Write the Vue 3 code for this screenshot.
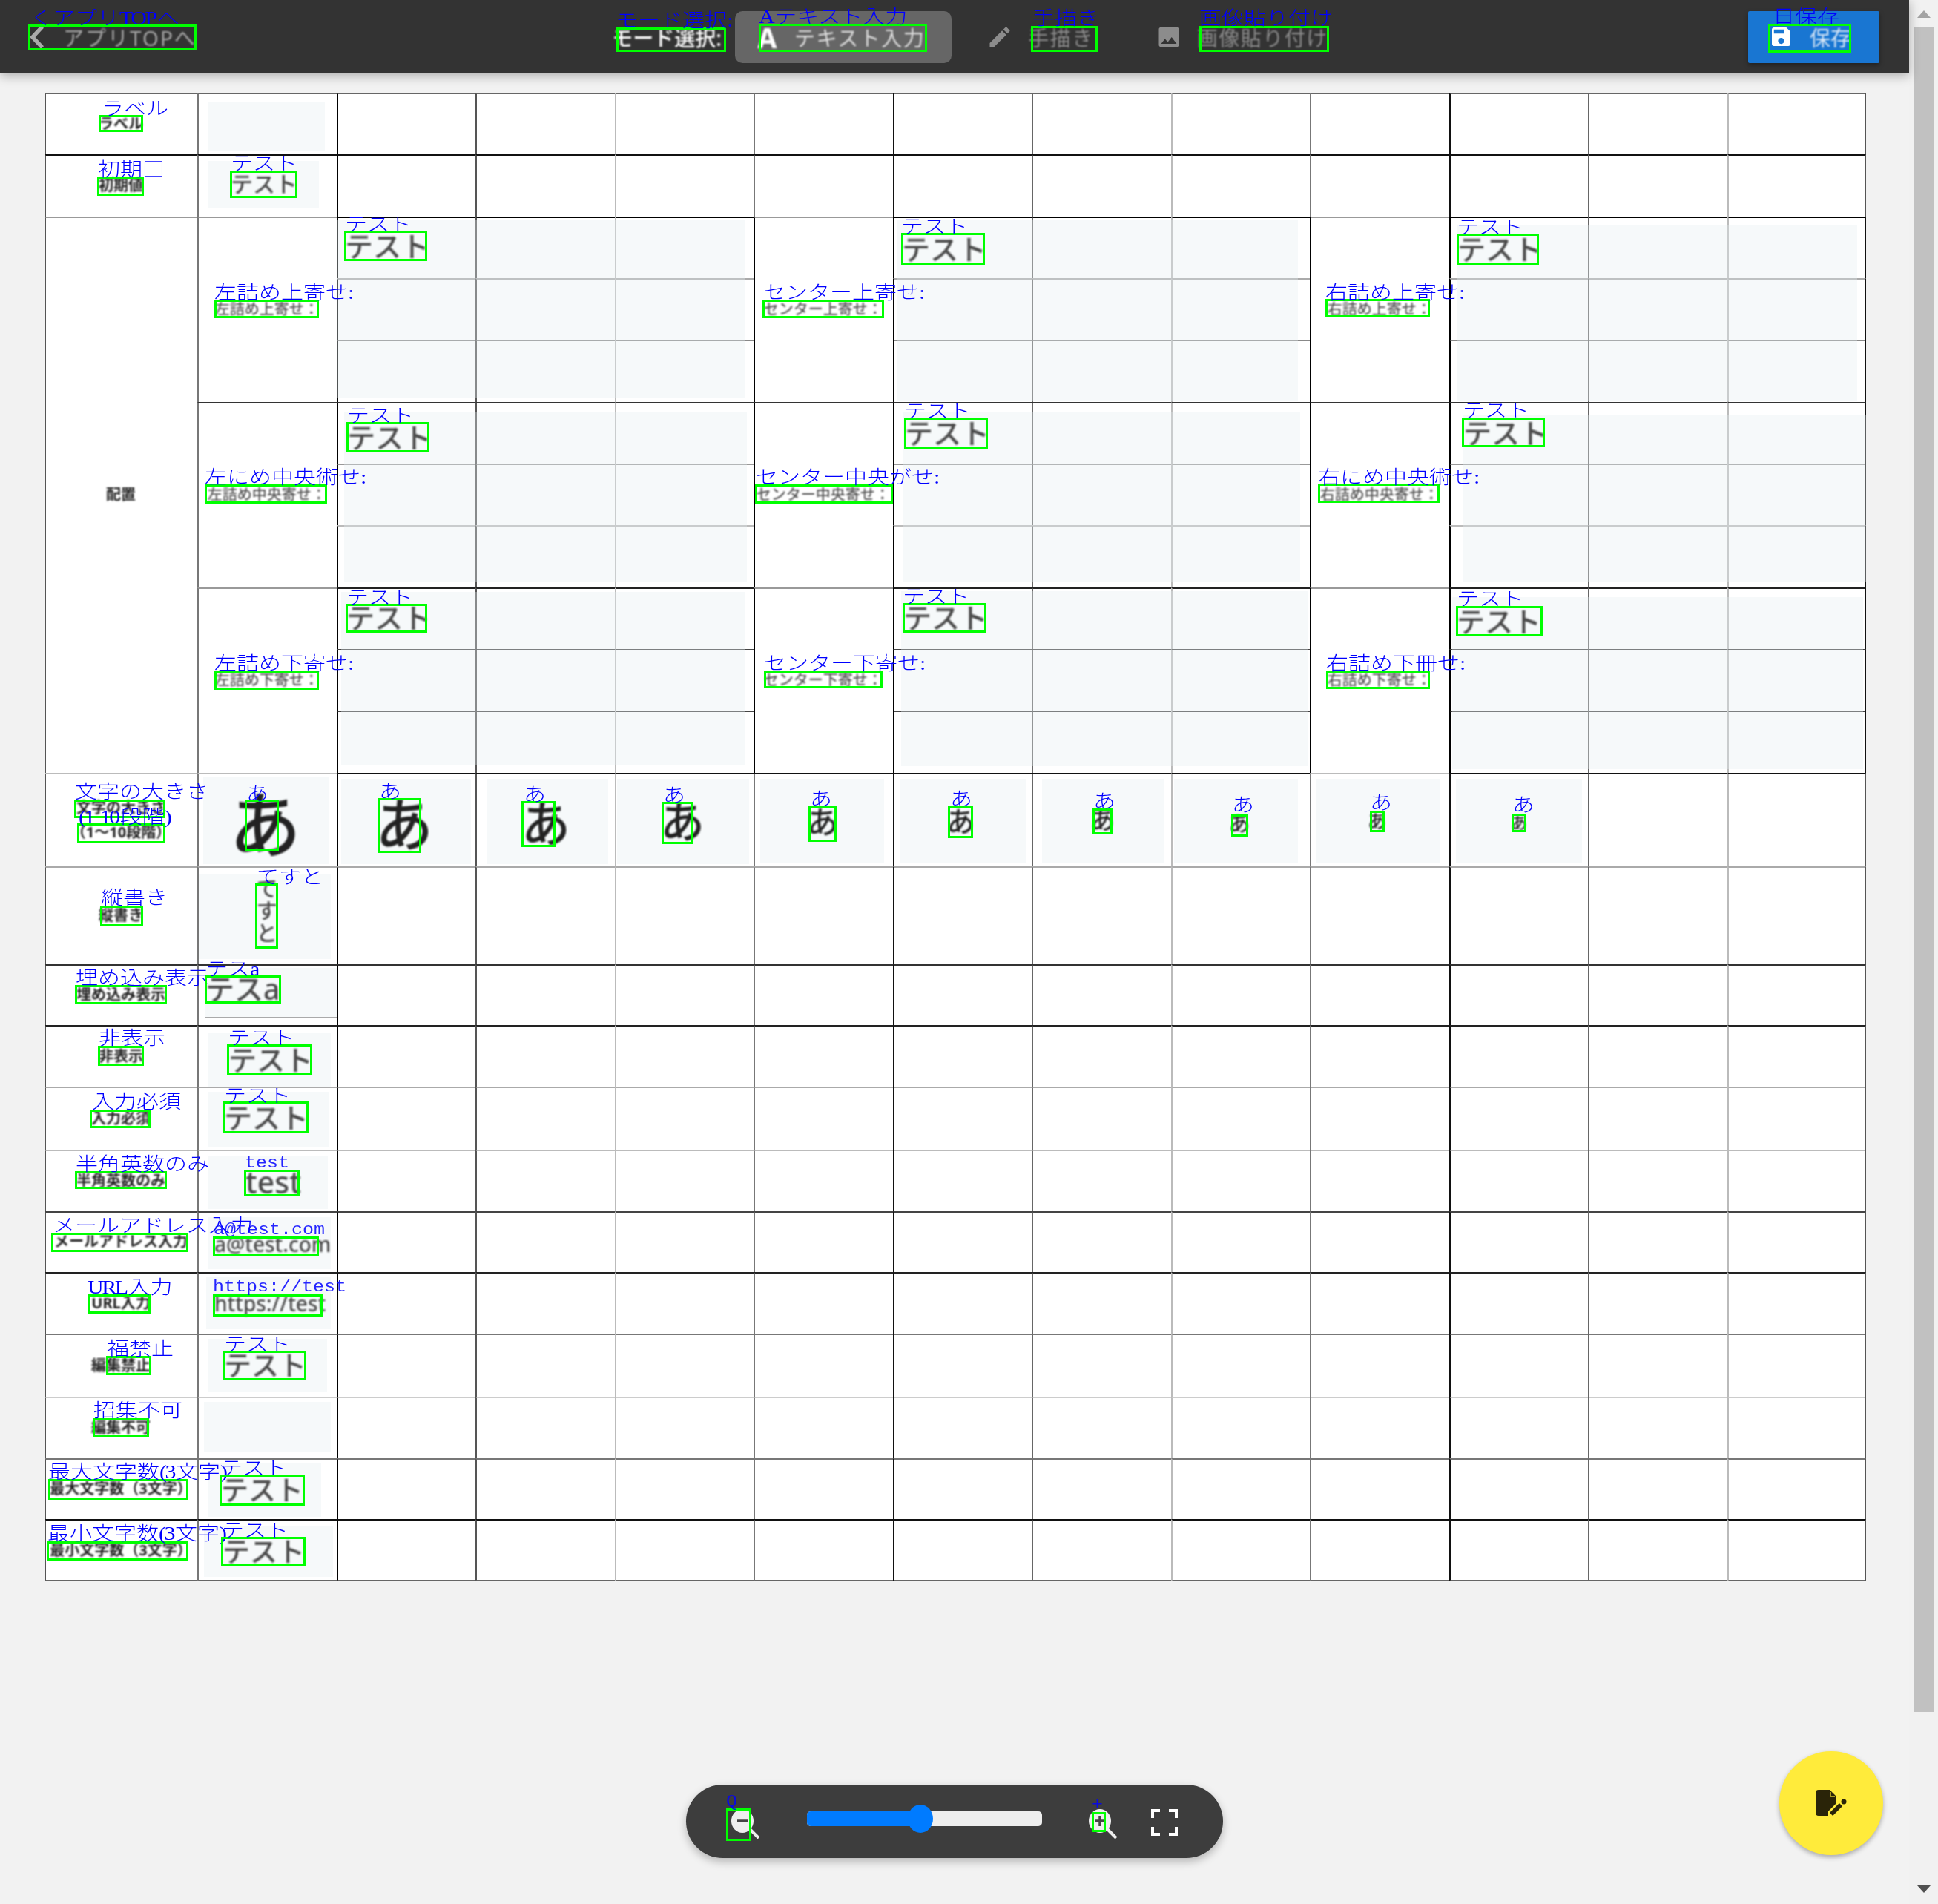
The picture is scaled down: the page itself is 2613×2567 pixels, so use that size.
<script setup>
const colX = (c) => (c === 0 ? 60 : 266 + 187.5 * (c - 1))
const rowLines = [125, 208, 292, 375, 458, 542, 625, 708, 792, 875, 958, 1042, 1168, 1300, 1382, 1465, 1550, 1633, 1715, 1798, 1883, 1966, 2048, 2132]
const rowY = (r) => rowLines[r]

const colTones = ['#555', '#777', '#000', '#555', '#bbb', '#777', '#111', '#666', '#bbb', '#777', '#111', '#666', '#bbb']
const rowTones = ['#666', '#111', '#888', '#aaa', '#888', '#333', '#999', '#bbb', '#999', '#444', '#444', '#bbb', '#aaa', '#333', '#222', '#aaa', '#bbb', '#444', '#222', '#777', '#ccc', '#777', '#111']

const inBlock = (c) => (c >= 2 && c <= 4) || (c >= 6 && c <= 8) || c >= 10
const merged = [
  [2, 0, 9, 1],
  ...[2, 5, 8].flatMap((r) => [1, 5, 9].map((c) => [r, c, 3, 1]))
]
const covered = new Set()
merged.forEach(([r, c, rs]) => {
  for (let i = 0; i < rs; i++) covered.add(`${r + i}-${c}`)
})

const topTone = (r, c) => {
  if (r === 2) return inBlock(c) ? '#000' : '#999'
  if (r === 5 && c >= 1) return '#333'
  if (r === 8) return inBlock(c) ? '#222' : c >= 1 ? '#999' : rowTones[r]
  if (r === 11) return inBlock(c) || c === 5 ? '#111' : '#bbb'
  return rowTones[r]
}
const leftTone = (r, c) => {
  if (r >= 2 && r <= 10 && [2, 5, 6, 9, 10].includes(c)) return '#000'
  return colTones[c]
}

const cells = []
for (let r = 0; r < 23; r++) {
  for (let c = 0; c < 13; c++) {
    const m = merged.find((x) => x[0] === r && x[1] === c)
    if (covered.has(`${r}-${c}`) && !m) continue
    const rs = m ? m[2] : 1
    cells.push({
      key: `${r}-${c}`,
      style: {
        gridArea: `${r + 1} / ${c + 1} / span ${rs} / span 1`,
        borderTopColor: topTone(r, c),
        borderLeftColor: leftTone(r, c),
        borderRight: c === 12 ? `2px solid ${r >= 2 && r <= 10 ? '#111' : '#555'}` : undefined,
        borderBottom: r + rs === 23 ? '2px solid #666' : undefined
      }
    })
  }
}

const label = (r, c, rs, text, kind = 'strong') => ({
  key: `l${r}-${c}`,
  text,
  kind,
  style: { gridArea: `${r + 1} / ${c + 1} / span ${rs} / span 1` }
})
const labels = [
  label(0, 0, 1, ['ラベル']),
  label(1, 0, 1, ['初期値']),
  label(2, 0, 9, ['配置']),
  label(11, 0, 1, ['文字の大きさ', '（1〜10段階）']),
  label(12, 0, 1, ['縦書き']),
  label(13, 0, 1, ['埋め込み表示']),
  label(14, 0, 1, ['非表示']),
  label(15, 0, 1, ['入力必須']),
  label(16, 0, 1, ['半角英数のみ']),
  label(17, 0, 1, ['メールアドレス入力']),
  label(18, 0, 1, ['URL入力']),
  label(19, 0, 1, ['編集禁止']),
  label(20, 0, 1, ['編集不可']),
  label(21, 0, 1, ['最大文字数（3文字）']),
  label(22, 0, 1, ['最小文字数（3文字）']),
  label(2, 1, 3, ['左詰め上寄せ：'], 'soft'),
  label(2, 5, 3, ['センター上寄せ：'], 'soft'),
  label(2, 9, 3, ['右詰め上寄せ：'], 'soft'),
  label(5, 1, 3, ['左詰め中央寄せ：'], 'soft'),
  label(5, 5, 3, ['センター中央寄せ：'], 'soft'),
  label(5, 9, 3, ['右詰め中央寄せ：'], 'soft'),
  label(8, 1, 3, ['左詰め下寄せ：'], 'soft'),
  label(8, 5, 3, ['センター下寄せ：'], 'soft'),
  label(8, 9, 3, ['右詰め下寄せ：'], 'soft')
]

const field = (r, c, rs, cs, [x1, y1, x2, y2], text, fs, tx, cy, mod) => ({
  key: `f${r}-${c}`,
  text,
  mod,
  style: {
    gridArea: `${r + 1} / ${c + 1} / span ${rs} / span ${cs}`,
    marginLeft: `${x1 - colX(c)}px`,
    marginTop: `${y1 - rowY(r)}px`,
    marginRight: `${colX(c + cs) - x2}px`,
    marginBottom: `${rowY(r + rs) - y2}px`,
    paddingLeft: `${text ? tx - x1 : 0}px`,
    paddingTop: `${text ? cy - fs / 2 - y1 : 0}px`,
    fontSize: `${fs}px`,
    lineHeight: `${fs}px`
  }
})
const T = 'テスト'
const A = 'あ'
const fields = [
  field(0, 1, 1, 1, [280, 137, 438, 204], '', 30, 0, 0),
  field(1, 1, 1, 1, [280, 217, 430, 280], T, 30, 311, 248),
  field(2, 2, 3, 3, [454, 297, 1005, 537], T, 38, 465, 331),
  field(2, 6, 3, 3, [1210, 297, 1750, 540], T, 38, 1216, 335),
  field(2, 10, 3, 3, [1964, 303, 2504, 540], T, 38, 1965, 335),
  field(5, 2, 3, 3, [464, 555, 1007, 784], T, 38, 468, 589),
  field(5, 6, 3, 3, [1217, 555, 1753, 785], T, 38, 1220, 583),
  field(5, 10, 3, 3, [1973, 560, 2516, 785], T, 38, 1972, 583),
  field(8, 2, 3, 3, [460, 798, 1005, 1032], T, 38, 467, 832),
  field(8, 6, 3, 3, [1215, 797, 1764, 1033], T, 38, 1218, 832),
  field(8, 10, 3, 3, [1958, 805, 2512, 1037], T, 38, 1964, 837),
  field(11, 1, 1, 1, [274, 1048, 443, 1165], A, 97, 309, 1110, 'dark'),
  field(11, 2, 1, 1, [460, 1050, 635, 1165], A, 78, 506, 1111, 'dark'),
  field(11, 3, 1, 1, [657, 1050, 820, 1165], A, 66, 703, 1109, 'dark'),
  field(11, 4, 1, 1, [832, 1050, 1010, 1165], A, 60, 890, 1107, 'dark'),
  field(11, 5, 1, 1, [1025, 1050, 1192, 1163], A, 42, 1088, 1108, 'dark'),
  field(11, 6, 1, 1, [1213, 1050, 1383, 1163], A, 38, 1276, 1106, 'dark'),
  field(11, 7, 1, 1, [1405, 1050, 1570, 1163], A, 33, 1470, 1105, 'dark'),
  field(11, 8, 1, 1, [1583, 1050, 1750, 1163], A, 28, 1657, 1110, 'dark'),
  field(11, 9, 1, 1, [1775, 1050, 1942, 1163], A, 25, 1844, 1106, 'dark'),
  field(11, 10, 1, 1, [1963, 1050, 2133, 1163], A, 22, 2037, 1108, 'dark'),
  field(12, 1, 1, 1, [268, 1178, 446, 1293], 'てすと', 29, 344, 1238, 'vert'),
  field(13, 1, 1, 1, [276, 1305, 454, 1373], 'テスa', 39, 277, 1332, 'line'),
  field(14, 1, 1, 1, [280, 1393, 446, 1465], T, 38, 308, 1428),
  field(15, 1, 1, 1, [280, 1472, 443, 1546], T, 38, 302, 1506),
  field(16, 1, 1, 1, [280, 1559, 442, 1630], 'test', 41, 331, 1593),
  field(17, 1, 1, 1, [280, 1641, 446, 1711], 'a@test.com', 28, 289, 1677),
  field(18, 1, 1, 1, [278, 1722, 446, 1792], 'https://test', 28, 289, 1757),
  field(19, 1, 1, 1, [280, 1805, 441, 1877], T, 37, 302, 1840),
  field(20, 1, 1, 1, [275, 1890, 446, 1957], '', 30, 0, 0),
  field(21, 1, 1, 1, [280, 1972, 433, 2045], T, 37, 298, 2008),
  field(22, 1, 1, 1, [275, 2058, 449, 2126], T, 37, 300, 2091)
]

const latin = /^[A-Za-z0-9():]+$/
const note = (x1, y1, x2, y2, text, tx, ty, mono) => ({
  key: `${x1}-${y1}`,
  parts: mono
    ? [{ t: text, lat: false }]
    : text.match(/[A-Za-z0-9():]+|[^A-Za-z0-9():]+/g).map((t) => ({ t, lat: latin.test(t) })),
  mono,
  box: { left: `${x1}px`, top: `${y1}px`, width: `${x2 - x1}px`, height: `${y2 - y1}px` },
  pos: { left: `${tx}px`, top: `${ty}px` }
})
const notes = [
  note(38, 33, 265, 68, 'くアプリTOPへ', 41, 11),
  note(831, 37, 979, 70, 'モード選択:', 830, 14),
  note(1023, 32, 1250, 70, 'Aテキスト入力', 1023, 9),
  note(1390, 35, 1480, 70, '手描き', 1392, 11),
  note(1617, 35, 1792, 70, '画像貼り付け', 1617, 11),
  note(2384, 32, 2496, 71, '日保存', 2390, 9),
  note(133, 155, 193, 178, 'ラベル', 137, 133),
  note(131, 238, 194, 264, '初期□', 132, 215),
  note(310, 230, 401, 267, T, 311, 207),
  note(464, 311, 576, 352, T, 465, 289),
  note(1215, 314, 1328, 357, T, 1215, 292),
  note(1964, 315, 2075, 357, T, 1964, 293),
  note(289, 404, 430, 429, '左詰め上寄せ:', 289, 381),
  note(1028, 404, 1192, 429, 'センター上寄せ:', 1029, 381),
  note(1787, 403, 1928, 428, '右詰め上寄せ:', 1787, 381),
  note(467, 569, 579, 610, T, 468, 547),
  note(1219, 563, 1332, 605, T, 1219, 541),
  note(1971, 563, 2083, 603, T, 1972, 540),
  note(276, 653, 441, 679, '左にめ中央術せ:', 276, 630),
  note(1018, 653, 1204, 679, 'センター中央がせ:', 1019, 630),
  note(1777, 652, 1941, 678, '右にめ中央術せ:', 1777, 630),
  note(466, 814, 576, 853, T, 467, 792),
  note(1217, 813, 1330, 853, T, 1217, 791),
  note(1963, 817, 2080, 858, T, 1964, 794),
  note(289, 904, 430, 930, '左詰め下寄せ:', 289, 881),
  note(1030, 904, 1190, 928, 'センター下寄せ:', 1030, 881),
  note(1788, 904, 1928, 929, '右詰め下冊せ:', 1788, 881),
  note(100, 1078, 223, 1103, '文字の大きさ', 101, 1054),
  note(104, 1110, 223, 1137, '(1 10段階)', 106, 1088),
  note(330, 1078, 376, 1148, A, 332, 1057),
  note(509, 1076, 568, 1150, A, 511, 1054),
  note(703, 1080, 749, 1142, A, 706, 1058),
  note(892, 1081, 934, 1138, A, 894, 1059),
  note(1090, 1087, 1128, 1135, A, 1092, 1064),
  note(1278, 1087, 1312, 1130, A, 1281, 1064),
  note(1473, 1090, 1500, 1125, A, 1474, 1067),
  note(1660, 1098, 1683, 1128, A, 1661, 1072),
  note(1847, 1093, 1867, 1122, A, 1847, 1069),
  note(2038, 1097, 2058, 1122, A, 2039, 1072),
  note(135, 1221, 193, 1249, '縦書き', 136, 1197),
  note(344, 1191, 375, 1279, 'てすと', 346, 1169),
  note(101, 1328, 225, 1354, '埋め込み表示', 102, 1305),
  note(276, 1315, 379, 1353, 'テスa', 277, 1293),
  note(132, 1410, 194, 1437, '非表示', 133, 1386),
  note(306, 1408, 421, 1450, T, 307, 1386),
  note(121, 1496, 203, 1521, '入力必須', 124, 1472),
  note(301, 1485, 416, 1528, T, 302, 1464),
  note(101, 1579, 225, 1603, '半角英数のみ', 102, 1556),
  note(329, 1577, 404, 1613, 'test', 330, 1555, true),
  note(69, 1662, 254, 1688, 'メールアドレス入力', 71, 1639),
  note(287, 1667, 430, 1693, 'a@test.com', 288, 1645, true),
  note(118, 1745, 203, 1771, 'URL入力', 118, 1722),
  note(287, 1745, 435, 1775, 'https://test', 287, 1722, true),
  note(143, 1828, 204, 1854, '福禁止', 144, 1805),
  note(301, 1821, 413, 1861, T, 302, 1799),
  note(125, 1912, 201, 1938, '招集不可', 126, 1888),
  note(65, 1994, 254, 2022, '最大文字数(3文字)', 65, 1971),
  note(296, 1988, 411, 2030, T, 297, 1966),
  note(63, 2078, 254, 2104, '最小文字数(3文字)', 64, 2054),
  note(298, 2072, 412, 2111, T, 299, 2050),
  note(979, 2438, 1013, 2482, 'Q', 979, 2416, true),
  note(1472, 2443, 1491, 2470, '+', 1472, 2420, true)
]
</script>

<template>
  <div class="page">
    <div class="ui">
      <div class="main">
        <header class="bar">
          <a class="back">
            <svg class="chev" viewBox="0 0 20 32"><polyline points="17,2 4,16 17,30" /></svg>
            <span class="soft-text">アプリTOPへ</span>
          </a>
          <div class="modes">
            <span class="mode-label soft-text">モード選択:</span>
            <button class="mode active"><b class="glyph-a soft-text">A</b><span class="soft-text">テキスト入力</span></button>
            <button class="mode">
              <svg class="mode-icon" viewBox="0 0 24 24"><path d="M3 17.25V21h3.75L17.81 9.94l-3.75-3.75L3 17.25zM20.71 7.04c.39-.39.39-1.02 0-1.41l-2.34-2.34c-.39-.39-1.02-.39-1.41 0l-1.83 1.83 3.75 3.75 1.83-1.83z" /></svg>
              <span class="soft-text">手描き</span>
            </button>
            <button class="mode">
              <svg class="mode-icon" viewBox="0 0 24 24"><path d="M21 19V5c0-1.1-.9-2-2-2H5c-1.1 0-2 .9-2 2v14c0 1.1.9 2 2 2h14c1.1 0 2-.9 2-2zM8.5 13.5l2.5 3.01L14.5 12l4.5 6H5l3.5-4.5z" /></svg>
              <span class="soft-text">画像貼り付け</span>
            </button>
          </div>
          <button class="save">
            <svg class="save-icon" viewBox="3 3 18 18"><path d="M17 3H5c-1.11 0-2 .9-2 2v14c0 1.1.89 2 2 2h14c1.1 0 2-.9 2-2V7l-4-4zm-5 16c-1.66 0-3-1.34-3-3s1.34-3 3-3 3 1.34 3 3-1.34 3-3 3zm3-10H5V5h10v4z" /></svg>
            <span class="soft-text">保存</span>
          </button>
        </header>
        <section class="sheet">
          <div v-for="cell in cells" :key="cell.key" class="cell" :style="cell.style"></div>
          <div v-for="f in fields" :key="f.key" class="field" :class="f.mod" :style="f.style">
            <span v-if="f.text" class="field-text">{{ f.text }}</span>
          </div>
          <div v-for="l in labels" :key="l.key" class="label" :class="l.kind" :style="l.style">
            <span v-for="line in l.text" :key="line">{{ line }}</span>
          </div>
        </section>
      </div>
      <aside class="scroll">
        <i class="arrow up"></i>
        <i class="thumb"></i>
        <i class="arrow down"></i>
      </aside>

      <div class="zoombar">
        <svg class="zoom-icon" viewBox="0 0 42 42">
          <line x1="26" y1="28" x2="38" y2="40" />
          <ellipse cx="16" cy="17" rx="15" ry="16" class="lens" />
          <line x1="9" y1="17" x2="23" y2="17" class="sign" />
        </svg>
        <div class="track"><div class="fill"></div><div class="knob"></div></div>
        <svg class="zoom-icon plus" viewBox="0 0 42 42">
          <line x1="26" y1="28" x2="38" y2="40" />
          <ellipse cx="16" cy="17" rx="15" ry="16" class="lens" />
          <line x1="9" y1="17" x2="23" y2="17" class="sign" />
          <line x1="16" y1="10" x2="16" y2="24" class="sign" />
        </svg>
        <svg class="expand" viewBox="0 0 36 36">
          <path d="M2 12V2H12M24 2H34V12M34 24V34H24M12 34H2V24" />
        </svg>
      </div>
      <button class="fab">
        <svg viewBox="0 0 42 36">
          <path class="doc" d="M4 0H19L28 9V18L17 29V35H4Q0 35 0 31V4Q0 0 4 0Z" />
          <path class="fold" d="M20 3V9H26" />
          <path class="pen" d="M21 33L34 20" />
          <circle class="doc" cx="38" cy="16" r="3.5" />
        </svg>
      </button>
    </div>

    <div class="notes">
      <template v-for="n in notes" :key="n.key">
        <div class="nbox" :style="n.box"></div>
        <span class="ntext" :class="{ mono: n.mono }" :style="n.pos"><span v-for="(p, i) in n.parts" :key="i" :class="{ lat: p.lat }">{{ p.t }}</span></span>
      </template>
    </div>
  </div>
</template>

<style>
html, body { margin: 0; background: #f2f2f2; overflow: hidden; }
</style>

<style scoped>
.page { position: relative; width: 2613px; height: 2567px; overflow: hidden; background: #f2f2f2; font-family: "Noto Sans", "Noto Sans CJK JP", sans-serif; }
.ui { display: flex; width: 100%; height: 100%; }
.main { width: 2574px; display: flex; flex-direction: column; }
.soft-text { filter: blur(0.9px); }
.bar { height: 99px; flex: none; display: flex; align-items: center; justify-content: space-between; padding: 0 40px; box-sizing: border-box; background: #333; box-shadow: 0 3px 14px rgba(0,0,0,.3); position: relative; z-index: 2; }
.back { width: 225px; display: flex; align-items: center; gap: 25px; color: #a5a5a5; font-size: 28px; letter-spacing: 2px; white-space: nowrap; }
.chev { width: 20px; height: 32px; flex: none; fill: none; stroke: #aaa; stroke-width: 5.5; }
.modes { display: flex; align-items: center; gap: 14px; margin-left: 30px; color: #fff; font-size: 28px; white-space: nowrap; }
.mode-label { width: 150px; font-weight: 500; }
.mode { display: flex; align-items: center; height: 70px; gap: 22px; padding: 0 36px; border: 0; background: none; color: #8c8c8c; font: inherit; letter-spacing: 1.5px; border-radius: 10px; }
.mode.active { background: #666; color: #ddd; padding-left: 30px; margin-left: 2px; }
.glyph-a { color: #fff; font-size: 38px; line-height: 1; font-family: "Noto Sans", sans-serif; }
.mode-icon { width: 36px; height: 36px; fill: #8c8c8c; flex: none; margin-left: -3px; margin-right: -2px; filter: blur(.6px); }
.save { width: 177px; height: 70px; display: flex; align-items: center; gap: 26px; padding: 0 0 0 32px; box-sizing: border-box; border: 0; border-radius: 2px; background: #1976d2; color: #d6e6f6; font: inherit; font-size: 28px; box-shadow: 0 3px 6px rgba(0,0,0,.35); }
.save-icon { width: 25px; height: 25px; fill: #fff; flex: none; }
.sheet { display: grid; margin: 26px 0 0 60px; width: 2456px; grid-template-columns: 206px repeat(12, 187.5px); grid-template-rows: 83px 84px 83px 83px 84px 83px 83px 84px 83px 83px 84px 126px 132px 82px 83px 85px 83px 82px 83px 85px 83px 82px 84px; background: #fff; filter: blur(.45px); }
.cell { border-top: 2px solid #888; border-left: 2px solid #888; box-sizing: border-box; }
.field { background: rgba(228, 237, 241, .35); box-sizing: border-box; color: #4a4a4a; white-space: nowrap; min-width: 0; min-height: 0; }
.field-text { display: block; filter: blur(.8px); font-weight: 500; }
.field.dark { color: #222; }
.field.vert .field-text { writing-mode: vertical-rl; display: inline-block; margin-top: -41px; letter-spacing: 1px; }
.field.line { border-bottom: 2px solid #aaa; }
.label { display: flex; flex-direction: column; align-items: center; justify-content: center; gap: 7px; font-size: 20px; line-height: 26px; white-space: nowrap; }
.label span { filter: blur(.8px); }
.label.strong { font-weight: 700; color: #222; }
.label.soft { color: #555; font-weight: 500; }
.scroll { width: 39px; background: #f1f1f1; display: flex; flex-direction: column; align-items: center; padding-top: 14px; box-sizing: border-box; }
.arrow { width: 0; height: 0; border-left: 9px solid transparent; border-right: 9px solid transparent; }
.arrow.up { border-bottom: 10px solid #a3a3a3; }
.arrow.down { border-top: 10px solid #505050; margin-top: 234px; }
.thumb { width: 27px; height: 2271px; background: #c1c1c1; margin-top: 13px; }
.zoombar { position: absolute; left: 925px; top: 2406px; width: 724px; height: 99px; box-sizing: border-box; padding-left: 60px; display: flex; align-items: center; border-radius: 50px; background: #3d3d3d; box-shadow: 0 5px 12px rgba(0,0,0,.25); filter: blur(.5px); }
.zoom-icon { width: 42px; height: 42px; flex: none; margin-top: 6px; fill: none; stroke: #eee; stroke-width: 4; }
.zoom-icon .lens { fill: #eee; stroke: none; }
.zoom-icon .sign { stroke: #444; stroke-width: 3.5; }
.zoom-icon.plus { margin-left: 62px; }
.track { position: relative; width: 317px; height: 20px; margin-left: 61px; margin-top: -7px; border-radius: 5px; background: #eee; }
.fill { width: 152px; height: 100%; border-radius: 5px 0 0 5px; background: #007bff; }
.knob { position: absolute; left: 136px; top: -9px; width: 34px; height: 38px; border-radius: 50%; background: #007bff; }
.expand { width: 36px; height: 36px; margin-left: 43px; margin-top: 2px; flex: none; fill: none; stroke: #fff; stroke-width: 4; }
.fab { position: absolute; left: 2399px; top: 2361px; width: 140px; height: 140px; padding: 0; display: flex; align-items: center; justify-content: center; border: 0; border-radius: 50%; background: #ffeb3b; box-shadow: 0 3px 6px rgba(0,0,0,.3); }
.fab svg { width: 42px; height: 36px; filter: blur(.5px); }
.doc { fill: #2a2408; }
.fold { fill: none; stroke: #a89a20; stroke-width: 2; }
.pen { fill: none; stroke: #2a2408; stroke-width: 6; }
.notes { position: absolute; inset: 0; pointer-events: none; z-index: 5; }
.nbox { position: absolute; box-sizing: border-box; border: 3px solid #0f0; }
.ntext { position: absolute; font-family: "Noto Sans CJK JP", sans-serif; font-size: 30px; line-height: 30px; font-weight: 300; color: #00f; white-space: nowrap; transform: translateY(-2px) scaleY(.84); transform-origin: top left; }
.ntext .lat { font-family: "Liberation Serif", serif; letter-spacing: -2.5px; margin-right: 2px; }
.ntext.mono { font-family: "Liberation Mono", monospace; font-size: 25px; line-height: 28px; opacity: .85; font-weight: 400; transform: translateY(1px) scaleY(.9); }
</style>
